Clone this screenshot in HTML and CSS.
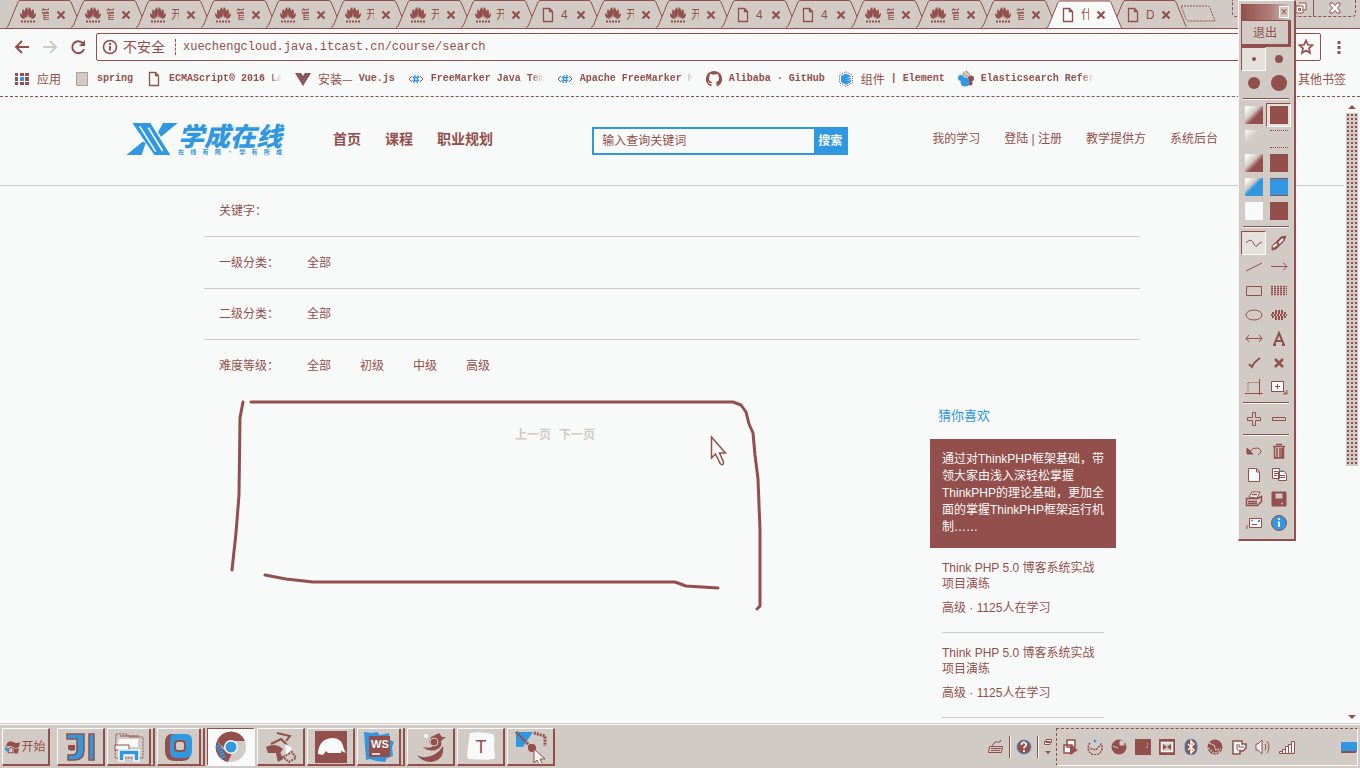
FILE: index.html
```html
<!DOCTYPE html>
<html lang="zh-CN">
<head>
<meta charset="utf-8">
<title>学成在线 - 课程搜索</title>
<link rel="stylesheet" href="styles.css">
</head>
<body>
<svg class="defs" aria-hidden="true">
  <symbol id="flower" viewBox="0 0 16 16"><path fill="currentColor" d="M7 11C4 7 4 2 7 0q2 5 0 11zM9 11c3-4 3-9 0-11Q7 5 9 11zM6 11C2 9 1 5 3 2q3 3 3 9zM10 11c4-2 5-6 3-9q-3 3-3 9zM5 12C1 12 0 9 0 6q4 2 5 6zM11 12c4 0 5-3 5-6q-4 2-5 6z"/><path d="M1 14.5h14" stroke="currentColor" stroke-width="2" stroke-dasharray="2 1"/></symbol>
  <symbol id="file" viewBox="0 0 16 16"><path d="M3.500 1.500h6l3 3v10h-9zM9.500 1.500v3h3" fill="none" stroke="currentColor" stroke-width="1.300"/></symbol>
  <symbol id="cross" viewBox="0 0 10 10"><path d="M1.500 1.500l7 7m0-7l-7 7" stroke="currentColor" stroke-width="2.200"/></symbol>
  <symbol id="tabshape" viewBox="0 0 76 28"><path d="M0 27.500Q2 27 3 24L12 2q1-1.500 2-1.500h49q1 0 2 1.500l9 22q1 3 2 3.500" fill="inherit" stroke="#934f4b"/></symbol>
  <symbol id="hash" viewBox="0 0 16 16"><path d="M4 5L1 8l3 3M12 5l3 3-3 3" fill="none" stroke="#934f4b"/><path d="M7 4L6 12M10 4L9 12M4.500 6.500h7M4.500 9.500h7" stroke="#2f98e0" stroke-width="1.300"/></symbol>
</svg>

<header class="browser">
  <div class="tabstrip">
    <div class="tab"><svg class="shape"><use href="#tabshape"/></svg><svg class="ic"><use href="#flower"/></svg><span>管</span><button aria-label="关闭"><svg><use href="#cross"/></svg></button></div>
    <div class="tab"><svg class="shape"><use href="#tabshape"/></svg><svg class="ic"><use href="#flower"/></svg><span>管</span><button aria-label="关闭"><svg><use href="#cross"/></svg></button></div>
    <div class="tab"><svg class="shape"><use href="#tabshape"/></svg><svg class="ic"><use href="#flower"/></svg><span>开</span><button aria-label="关闭"><svg><use href="#cross"/></svg></button></div>
    <div class="tab"><svg class="shape"><use href="#tabshape"/></svg><svg class="ic"><use href="#flower"/></svg><span>管</span><button aria-label="关闭"><svg><use href="#cross"/></svg></button></div>
    <div class="tab"><svg class="shape"><use href="#tabshape"/></svg><svg class="ic"><use href="#flower"/></svg><span>管</span><button aria-label="关闭"><svg><use href="#cross"/></svg></button></div>
    <div class="tab"><svg class="shape"><use href="#tabshape"/></svg><svg class="ic"><use href="#flower"/></svg><span>开</span><button aria-label="关闭"><svg><use href="#cross"/></svg></button></div>
    <div class="tab"><svg class="shape"><use href="#tabshape"/></svg><svg class="ic"><use href="#flower"/></svg><span>开</span><button aria-label="关闭"><svg><use href="#cross"/></svg></button></div>
    <div class="tab"><svg class="shape"><use href="#tabshape"/></svg><svg class="ic"><use href="#flower"/></svg><span>开</span><button aria-label="关闭"><svg><use href="#cross"/></svg></button></div>
    <div class="tab"><svg class="shape"><use href="#tabshape"/></svg><svg class="ic"><use href="#file"/></svg><span>4</span><button aria-label="关闭"><svg><use href="#cross"/></svg></button></div>
    <div class="tab"><svg class="shape"><use href="#tabshape"/></svg><svg class="ic"><use href="#flower"/></svg><span>开</span><button aria-label="关闭"><svg><use href="#cross"/></svg></button></div>
    <div class="tab"><svg class="shape"><use href="#tabshape"/></svg><svg class="ic"><use href="#flower"/></svg><span>开</span><button aria-label="关闭"><svg><use href="#cross"/></svg></button></div>
    <div class="tab"><svg class="shape"><use href="#tabshape"/></svg><svg class="ic"><use href="#file"/></svg><span>4</span><button aria-label="关闭"><svg><use href="#cross"/></svg></button></div>
    <div class="tab"><svg class="shape"><use href="#tabshape"/></svg><svg class="ic"><use href="#file"/></svg><span>4</span><button aria-label="关闭"><svg><use href="#cross"/></svg></button></div>
    <div class="tab"><svg class="shape"><use href="#tabshape"/></svg><svg class="ic"><use href="#flower"/></svg><span>管</span><button aria-label="关闭"><svg><use href="#cross"/></svg></button></div>
    <div class="tab"><svg class="shape"><use href="#tabshape"/></svg><svg class="ic"><use href="#flower"/></svg><span>管</span><button aria-label="关闭"><svg><use href="#cross"/></svg></button></div>
    <div class="tab"><svg class="shape"><use href="#tabshape"/></svg><svg class="ic"><use href="#flower"/></svg><span>管</span><button aria-label="关闭"><svg><use href="#cross"/></svg></button></div>
    <div class="tab active"><svg class="shape"><use href="#tabshape"/></svg><svg class="ic"><use href="#file"/></svg><span>什</span><button aria-label="关闭"><svg><use href="#cross"/></svg></button></div>
    <div class="tab"><svg class="shape"><use href="#tabshape"/></svg><svg class="ic"><use href="#file"/></svg><span>D</span><button aria-label="关闭"><svg><use href="#cross"/></svg></button></div>
    <button class="newtab" aria-label="新标签页"><svg viewBox="0 0 36 18"><path d="M1 1h26q2 0 3 2l5 13H9q-2 0-3-2z" fill="none" stroke="#934f4b" stroke-dasharray="2 1"/></svg></button>
    <div class="winbtns">
      <button aria-label="还原"><svg viewBox="0 0 12 12"><path d="M4 1h7v7H8.500M1 4h7v7H1zM3.500 6.500h2v2h-2z" fill="#f8faf9" stroke="#934f4b"/></svg></button>
      <button aria-label="关闭窗口"><svg viewBox="0 0 12 12"><path d="M1 1h3l2 2.500L8 1h3v2L8.500 6 11 9v2H8L6 8.500 4 11H1V9l2.500-3L1 3z" fill="#f8faf9" stroke="#934f4b"/></svg></button>
    </div>
  </div>

  <div class="toolbar">
    <button aria-label="后退"><svg viewBox="0 0 16 16"><path d="M15 8H2m6-6L2 8l6 6" fill="none" stroke="#934f4b" stroke-width="2"/></svg></button>
    <button aria-label="前进"><svg viewBox="0 0 16 16"><path d="M1 8h13M8 2l6 6-6 6" fill="none" stroke="#d2cbc5" stroke-width="2"/></svg></button>
    <button aria-label="刷新"><svg viewBox="0 0 16 16"><path d="M13 4.500A6 6 0 1 0 14 10" fill="none" stroke="#934f4b" stroke-width="2"/><path d="M15 1v6H9z" fill="#934f4b"/></svg></button>
    <div class="omnibox">
      <svg viewBox="0 0 16 16"><circle cx="8" cy="8" r="6.500" fill="none" stroke="#934f4b" stroke-width="1.600"/><path d="M8 7v4.500M8 4v2" stroke="#934f4b" stroke-width="2"/></svg>
      <span class="insecure">不安全</span>
      <input aria-label="地址" value="xuechengcloud.java.itcast.cn/course/search">
      <svg viewBox="0 0 16 16"><path d="M8 1.500l1.900 4.300 4.600.4-3.500 3.100 1 4.700-4-2.500L4 14l1-4.700L1.500 6.200l4.600-.4z" fill="none" stroke="#934f4b" stroke-width="1.700"/></svg>
    </div>
    <button aria-label="菜单"><svg viewBox="0 0 16 16"><path d="M6.500 2h3v3h-3zM6.500 7h3v3h-3zM6.500 12h3v3h-3z" fill="#934f4b"/></svg></button>
  </div>

  <nav class="bookmarks">
    <a href="#"><svg viewBox="0 0 16 16"><path fill="#934f4b" d="M1 2h3v3H1zM6 2h4v3H6zM11 2h4v3h-4zM1 6h3v4H1zM11 6h4v4h-4zM1 11h3v3H1zM6 11h4v3H6zM11 11h4v3h-4z"/><path fill="#2f98e0" d="M6 6h4v4H6z"/></svg><span class="zh">应用</span></a>
    <a href="#"><svg viewBox="0 0 16 16"><path d="M2.500 1.500h11v13h-11z" fill="#d2cbc5" stroke="#934f4b" stroke-dasharray="1 1"/></svg><span>spring</span></a>
    <a href="#"><svg><use href="#file"/></svg><span class="clip">ECMAScript® 2016 Language</span></a>
    <a href="#"><svg viewBox="0 0 16 16"><path d="M0 2h6l2 3 2-3h6L8 15z" fill="#934f4b"/><path d="M3 2l5 8 5-8" fill="none" stroke="#2f98e0" stroke-dasharray="1 1"/></svg><span class="mixed"><b class="zh">安装</b> <b class="zh">—</b> Vue.js</span></a>
    <a href="#"><svg><use href="#hash"/></svg><span class="clip">FreeMarker Java Template</span></a>
    <a href="#"><svg><use href="#hash"/></svg><span class="clip">Apache FreeMarker Manual</span></a>
    <a href="#"><svg viewBox="0 0 16 16"><path fill="#934f4b" d="M8 0a8 8 0 0 0-2.600 15.600V13c-2 .4-2.700-.6-3-1.500l-.8-1c.9 0 1.300.6 1.700 1.200.6.800 1.300.7 2.200.4q.1-.8.600-1.200C3.500 10.500 3 9 3 7.200q0-1.300.8-2.200Q3.500 4 4 2.700q1 0 2.100.9Q8 3.200 9.900 3.600 11 2.700 12 2.700q.5 1.300.2 2.300.8.900.8 2.200c0 1.800-.5 3.300-3.100 3.700q.7.500.7 2v2.700A8 8 0 0 0 8 0z"/></svg><span>Alibaba · GitHub</span></a>
    <a href="#"><svg viewBox="0 0 16 16"><path d="M8 .7l6.500 3.700v7.300L8 15.300 1.500 11.700V4.400z" fill="#f8faf9" stroke="#934f4b" stroke-dasharray="1 1"/><path d="M8 2.500l5 2.700-5 2.600 5-1.200v1.500L8 10l5-1v2l-5 2.800-5-2.800V5z" fill="#2f98e0"/></svg><span class="mixed"><b class="zh">组件</b> | Element</span></a>
    <a href="#"><svg viewBox="0 0 16 16"><circle cx="8" cy="4" r="4" fill="#d2cbc5"/><path d="M5 2l5 4M8 0l4 4" stroke="#934f4b" stroke-dasharray="1 1"/><circle cx="13" cy="7.500" r="3" fill="#934f4b"/><circle cx="12" cy="12" r="2.500" fill="#934f4b"/><circle cx="3" cy="7" r="3" fill="#2f98e0"/><circle cx="7" cy="11" r="4.500" fill="#2f98e0"/></svg><span class="clip">Elasticsearch Reference</span></a>
    <a class="others" href="#"><span class="zh">其他书签</span></a>
  </nav>
</header>

<div class="viewport">
  <div class="page">
    <header class="site">
      <a class="logo" href="#" aria-label="学成在线">
        <svg viewBox="0 0 154 96"><path d="M18 0h54l60 96H84z" fill="#2f98e0"/><path d="M40 10l48 76M66 14l43 70" stroke="#f8faf9" stroke-width="5" fill="none"/><path d="M110 0h44l-50 41-9-14zM0 96h46l12-36-9-4z" fill="#2f98e0"/></svg>
        <span class="wordmark"><strong>学成在线</strong><small><i>在</i><i>线</i><i>有</i><i>网</i><i>·</i><i>学</i><i>有</i><i>所</i><i>成</i></small></span>
      </a>
      <nav class="mainnav"><a href="#">首页</a><a href="#">课程</a><a href="#">职业规划</a></nav>
      <form class="search"><input aria-label="搜索课程" placeholder="输入查询关键词"><button type="button">搜索</button></form>
      <nav class="usernav"><a href="#">我的学习</a><a href="#">登陆 | 注册</a><a href="#">教学提供方</a><a href="#">系统后台</a></nav>
    </header>

    <section class="filters">
      <div class="row"><span class="label">关键字：</span></div>
      <div class="row"><span class="label">一级分类：</span><a href="#">全部</a></div>
      <div class="row"><span class="label">二级分类：</span><a href="#">全部</a></div>
      <div class="row"><span class="label">难度等级：</span><a href="#">全部</a><a href="#">初级</a><a href="#">中级</a><a href="#">高级</a></div>
    </section>

    <main class="content">
      <div class="results"><nav class="pager"><a href="#">上一页</a><a href="#">下一页</a></nav></div>
      <aside class="guess">
        <h2>猜你喜欢</h2>
        <p class="intro">通过对ThinkPHP框架基础，带领大家由浅入深轻松掌握ThinkPHP的理论基础，更加全面的掌握ThinkPHP框架运行机制……</p>
        <article><a href="#">Think PHP 5.0 博客系统实战项目演练</a><p>高级 · 1125人在学习</p></article>
        <article><a href="#">Think PHP 5.0 博客系统实战项目演练</a><p>高级 · 1125人在学习</p></article>
      </aside>
    </main>
  </div>
  <div class="scrollbar"><i class="up"></i><div class="track"><div class="thumb"></div></div><i class="down"></i></div>
</div>

<footer class="taskbar">
  <button class="start"><svg viewBox="0 0 16 16"><path d="M2 4q3-3 6-1 4 2 7 0l-1 5q-3 2-6 0-3-2-7 0z" fill="#934f4b"/><path d="M4 9q3-1 4 0v5q-3-1-5 0z" fill="#d2cbc5" stroke="#934f4b"/><path d="M9 9q3 1 5 0l-1 5q-2 1-4 0z" fill="#934f4b"/><path d="M0 8l3 1v4l-3-2z" fill="#2f98e0"/></svg>开始</button>
  <div class="tasks">
    <button aria-label="IDE"><svg viewBox="0 0 32 32"><path d="M2 3h17v16q0 10-9 10H3v-5h4q5 0 5-5V8H2zM24 3h5v26h-5z" fill="#2f98e0" stroke="#934f4b" stroke-width="1.500"/><path d="M3 14h7v5q-5 2-7-1z" fill="#934f4b"/></svg></button>
    <button class="stacked" aria-label="文件"><svg viewBox="0 0 32 32"><path d="M3 3h11l2 3h14v21H2z" fill="#d2cbc5" stroke="#934f4b" stroke-dasharray="2 1"/><path d="M6 8h19v8H4z" fill="#f8faf9"/><path d="M2 14h14v5H2zM7 5h19" fill="#f8faf9" stroke="#934f4b"/><path d="M6 30V19h20v11h-5v-6H11v6z" fill="#2f98e0" stroke="#f8faf9" stroke-width="1.500"/></svg></button>
    <button class="stacked" aria-label="虚拟机"><svg viewBox="0 0 32 32"><path d="M7 3h16v6h5v12q0 9-9 9h-7q-10 0-10-10V11q0-6 5-8z" fill="#934f4b"/><path d="M12 3h11q6 0 6 6v11q0 7-7 7H13q-6 0-6-7V9q0-6 5-6z" fill="#2f98e0"/><rect x="12" y="10" width="10" height="10" rx="3" fill="#d2cbc5" stroke="#934f4b" stroke-width="2"/></svg></button>
    <button class="pressed" aria-label="浏览器"><svg viewBox="0 0 32 32"><circle cx="16" cy="16" r="15" fill="#d2cbc5"/><path d="M2 10A15 15 0 0 1 30 10H16l-6 8z" fill="#934f4b"/><path d="M2 10A15 15 0 0 0 13 31l4-9-9-4z" fill="#934f4b"/><path d="M3 14l6 14" stroke="#2f98e0" stroke-width="5" stroke-dasharray="2 1"/><circle cx="16" cy="16" r="7" fill="#f8faf9"/><circle cx="16" cy="16" r="5.500" fill="#2f98e0"/></svg></button>
    <button aria-label="工具"><svg viewBox="0 0 32 32"><path d="M12 2l13 3-4 5M6 13l10-5 6 6" fill="none" stroke="#934f4b" stroke-width="2"/><path d="M1 16q9-5 17 2l-3 4H3zM14 18l4 10-5 3-2-8z" fill="#934f4b"/><path d="M20 13l7 4-6 8z" fill="#f8faf9"/><path d="M18 26l9-5 4 6-7 4z" fill="none" stroke="#934f4b" stroke-width="2" stroke-dasharray="2 1"/></svg></button>
    <button aria-label="数据库"><svg viewBox="0 0 32 32"><path d="M0 0h32v32H0z" fill="#934f4b"/><path d="M3 21Q5 7 18 7q9 0 11 11l2 4-5-2v2H13l-2-2-3 4-5-1z" fill="#f8faf9"/></svg></button>
    <button class="stacked" aria-label="WebStorm"><svg viewBox="0 0 32 32"><path d="M1 1l8 1 5-1 3 3 9-2 1 7 4 2-2 5 1 9-6 2-2 4-9-1-6-2-4 1z" fill="#2f98e0"/><path d="M6 5h21v21H6z" fill="#934f4b"/><path d="M9 23h8" stroke="#f8faf9" stroke-width="1.500"/><text x="8" y="17" class="ws">WS</text></svg></button>
    <button aria-label="XMind"><svg viewBox="0 0 32 32"><path d="M2 24q9 5 18-1 5-3 8-8 2 14-12 16Q7 31 2 24z" fill="#934f4b"/><path d="M16 6l8-4 3 4h4l-5 4q2 6-5 9-8 2-13-3 8 2 10-1-6-2-2-9z" fill="#934f4b"/><circle cx="19" cy="11" r="4" fill="none" stroke="#d2cbc5"/><path d="M3 24q10 3 20-4" stroke="#d2cbc5" fill="none"/><circle cx="11" cy="5" r="2" fill="#f8faf9"/></svg></button>
    <button aria-label="Typora"><svg viewBox="0 0 32 32"><path d="M5 2q10-2 23 1 2 2 1 12l1 12q-4 3-26 1-3-1-1-12z" fill="#f8faf9"/><text x="16" y="22" text-anchor="middle" class="ty">T</text></svg></button>
    <button aria-label="画笔"><svg viewBox="0 0 32 32"><path d="M1 1h17L8 16H1z" fill="#2f98e0"/><path d="M1 1l17 17M19 2l11 3v10" fill="none" stroke="#934f4b" stroke-width="3" stroke-dasharray="2 1"/><circle cx="17" cy="17" r="4" fill="#934f4b"/><path d="M19 18v14l3-3 2 4 3-1-2-4h5z" fill="#f8faf9" stroke="#934f4b"/></svg></button>
  </div>
  <div class="tools">
    <svg viewBox="0 0 16 16"><path d="M1.500 7.500h13l-1 6h-13zM4 7l3-4h5l1-2M3 9.500h10M3 11.500h9" fill="none" stroke="#934f4b"/></svg>
    <span class="divider"></span>
    <svg viewBox="0 0 16 16"><circle cx="8" cy="8" r="7" fill="#934f4b" stroke="#2f98e0"/><path d="M5.500 6q0-3 3-2.500 3 1 1 3.500Q8 8 8 9.500M8 11v2" stroke="#f8faf9" stroke-width="1.800" fill="none"/></svg>
    <span class="divider"></span>
    <svg class="mini" viewBox="0 0 8 16"><path d="M2 .5h5.500v3H2zM.5 2.500H6v3H.5z" fill="#f8faf9" stroke="#934f4b"/><path d="M1 12h6l-3 3z" fill="#934f4b"/></svg>
  </div>
  <div class="tray">
    <svg viewBox="0 0 16 16"><path d="M4 1h8v7H4zM1 6h8v8H1z" fill="#f8faf9" stroke="#934f4b" stroke-width="1.500"/><path d="M7 6l8 5-8 5z" fill="#934f4b"/></svg>
    <svg viewBox="0 0 16 16"><path d="M3 4a7 7 0 1 0 11 1l-5 6-7-2" fill="none" stroke="#934f4b" stroke-width="1.500" stroke-dasharray="2 1"/><circle cx="8" cy="2" r="1.300" fill="#2f98e0"/></svg>
    <svg viewBox="0 0 16 16"><circle cx="8" cy="8" r="7.500" fill="#934f4b"/><path d="M9 2h4v4H9zM2 7l5 2" fill="#d2cbc5" stroke="#d2cbc5"/></svg>
    <svg viewBox="0 0 16 16"><path d="M0 0h16v16H0z" fill="#934f4b"/><path d="M11 9l2-2M12 5h1" stroke="#d2cbc5"/></svg>
    <svg viewBox="0 0 16 16"><path d="M0 0h16v16H0z" fill="#934f4b"/><path d="M2.500 3.500h11v9h-11z" fill="#d2cbc5" stroke="#f8faf9" stroke-width="1.500"/><path d="M4 5l4 3-4 3zM12 5L8 8l4 3z" fill="#934f4b"/></svg>
    <svg viewBox="0 0 16 16"><rect x="2" width="12" height="16" rx="6" fill="#934f4b" stroke="#2f98e0"/><path d="M5 5l6 6-3 3V2l3 3-6 6" fill="none" stroke="#f8faf9" stroke-width="1.500"/></svg>
    <svg viewBox="0 0 16 16"><circle cx="8" cy="8" r="7.500" fill="#934f4b"/><path d="M2 4l5 2 2 5 5-1M1 9l6 5 6-1" stroke="#d2cbc5" stroke-width="1.500" fill="none" stroke-dasharray="2 1"/></svg>
    <svg viewBox="0 0 16 16"><path d="M2 2h9v3h4v4l-3 3H9v3H2z" fill="#f8faf9" stroke="#934f4b" stroke-width="1.500"/><path d="M6 5v5q1 3 4 1M8 5v3h5" fill="none" stroke="#934f4b"/></svg>
    <svg viewBox="0 0 16 16"><path d="M1 5h2l4-4v14l-4-4H1z" fill="#f8faf9" stroke="#934f4b"/><path d="M10 5q2 3 0 6M12 2q4 6 0 12" fill="none" stroke="#934f4b"/></svg>
    <svg viewBox="0 0 16 16"><path d="M.5 12.500h3v2h-3zM3.500 10.500h3v4h-3zM6.500 7.500h3v7h-3zM9.500 5.500h3v9h-3zM12.500 2.500h3v12h-3z" fill="#f8faf9" stroke="#934f4b"/></svg>
    <svg class="desktop" viewBox="0 0 16 16"><path d="M0 3h16v10H0z" fill="#2f98e0"/><path d="M0 13h15" stroke="#934f4b" stroke-width="2"/></svg>
  </div>
</footer>

<svg class="ink" aria-hidden="true">
  <g fill="none" stroke="#934f4b" stroke-width="3" stroke-linecap="round" stroke-linejoin="round">
    <path d="M243 402L240 418L239 495L236 533L232 570"/>
    <path d="M251 402H733L741 405L746 412L749 424L753 433L755 455L758 479L760 530V606L757 609"/>
    <path d="M265 575L286 579L313 582H675L686 586L718 588"/>
  </g>
  <path d="M711.500 437v21l4-4 5 10q3 2 3-2l-4-9h6z" fill="#f8faf9" stroke="#934f4b" stroke-width="1.500"/>
</svg>

<aside class="palette" aria-label="画图工具">
  <div class="title"><button aria-label="关闭工具">×</button></div>
  <button class="exit">退出</button>
  <div class="grid">
    <button class="on" aria-label="笔1"><svg viewBox="0 0 18 18"><circle cx="9" cy="9" r="2" fill="#934f4b"/></svg></button>
    <button aria-label="笔2"><svg viewBox="0 0 18 18"><circle cx="9" cy="9" r="4" fill="#934f4b"/></svg></button>
    <button aria-label="笔3"><svg viewBox="0 0 18 18"><circle cx="9" cy="9" r="6" fill="#934f4b"/></svg></button>
    <button aria-label="笔4"><svg viewBox="0 0 18 18"><circle cx="9" cy="9" r="8" fill="#934f4b"/></svg></button>
  </div>
  <hr>
  <div class="grid">
    <button aria-label="透明红"><i class="sw fade"></i></button><button class="on" aria-label="红"><i class="sw red"></i></button>
    <button aria-label="透明灰"><i class="sw fadegrey"></i></button><button aria-label="灰"><i class="sw grey"></i></button>
    <button aria-label="透明棕"><i class="sw fade"></i></button><button aria-label="棕"><i class="sw red"></i></button>
    <button aria-label="透明蓝"><i class="sw fadeblue"></i></button><button aria-label="蓝"><i class="sw blue"></i></button>
    <button aria-label="白"><i class="sw white"></i></button><button aria-label="黑"><i class="sw red"></i></button>
  </div>
  <hr>
  <div class="grid lines">
    <button class="on" aria-label="曲线"><svg viewBox="0 0 18 18"><path d="M1 9q4-5 7-1 3 8 5 2l4-2"/></svg></button>
    <button aria-label="橡皮"><svg viewBox="0 0 18 18"><path d="M2 12l9-9 5-1-2 5-8 8-4 1z" fill="#934f4b"/><path d="M3 13l4-3M9 9l4-4" stroke="#f8faf9" stroke-width="2"/></svg></button>
    <button aria-label="直线"><svg viewBox="0 0 18 18"><path d="M1 13L17 5"/></svg></button>
    <button aria-label="箭头"><svg viewBox="0 0 18 18"><path d="M1 8.500h16m-4-4l4 4-4 4"/></svg></button>
    <button aria-label="矩形"><svg viewBox="0 0 18 18"><path d="M1.500 4.500h15v9h-15z"/></svg></button>
    <button aria-label="实心矩形"><svg viewBox="0 0 18 18"><path d="M1 4.500h16M1 6.500h16M1 8.500h16M1 10.500h16M1 12.500h16" stroke-width="1.500" stroke-dasharray="2 1"/></svg></button>
    <button aria-label="椭圆"><svg viewBox="0 0 18 18"><ellipse cx="9" cy="9" rx="8" ry="5"/></svg></button>
    <button aria-label="实心椭圆"><svg viewBox="0 0 18 18"><path d="M5 5h8M2 7h14M1 9h16M2 11h14M5 13h8" stroke-width="1.800" stroke-dasharray="2 1"/></svg></button>
    <button aria-label="双箭头"><svg viewBox="0 0 18 18"><path d="M1 8.500h16M4 5L1 8.500 4 12M14 5l3 3.500-3 3.500"/></svg></button>
    <button aria-label="文字"><svg viewBox="0 0 18 18"><path d="M4 15L9 3l5 12M6 11h6M3 15h3M12 15h3" stroke-width="2"/></svg></button>
    <button aria-label="对勾"><svg viewBox="0 0 18 18"><path d="M4 10l3 3q2-5 8-9" stroke-width="2"/></svg></button>
    <button aria-label="叉"><svg viewBox="0 0 18 18"><path d="M5 5l8 8M13 5l-8 8" stroke-width="2.500"/></svg></button>
    <button aria-label="截图"><svg viewBox="0 0 18 18"><path d="M3 16V4.500h11" stroke-dasharray="1 1"/><path d="M0 15.500h18M14.500 1v16"/></svg></button>
    <button aria-label="放大"><svg viewBox="0 0 18 18"><path d="M1.500 3.500h12v10h-12z" fill="#f8faf9"/><path d="M5 8.500h5M7.500 6v5M13 13l4 3m0-4v4h-4"/></svg></button>
  </div>
  <hr>
  <div class="grid lines">
    <button aria-label="加"><svg viewBox="0 0 18 18"><path d="M7.500 2.500h3v5h5v3h-5v5h-3v-5h-5v-3h5z"/></svg></button>
    <button aria-label="减"><svg viewBox="0 0 18 18"><path d="M2.500 7.500h13v3h-13z"/></svg></button>
  </div>
  <hr>
  <div class="grid lines">
    <button aria-label="撤销"><svg viewBox="0 0 18 18"><path d="M4 10q4-5 9-4 6 3 0 7"/><path d="M2 6v6h6z" fill="#934f4b"/></svg></button>
    <button aria-label="删除"><svg viewBox="0 0 18 18"><path d="M3 4.500h12M6 2.500h6M4.500 5v11h9V5M7 6v10M10 6v10M12 6v10" stroke-width="1.500"/></svg></button>
    <button aria-label="新建"><svg viewBox="0 0 18 18"><path d="M3.500 2.500h8l3 3v10h-11z" fill="#f8faf9"/><path d="M11.500 3v3h3"/></svg></button>
    <button aria-label="复制"><svg viewBox="0 0 18 18"><path d="M2.500 2.500h7v10h-7zM8.500 5.500h6l2 3v6h-8z" fill="#f8faf9"/><path d="M4 5.500h4M4 7.500h4M4 9.500h3M10 9.500h5M10 11.500h5"/><path d="M9 5h5" stroke="#2f98e0"/></svg></button>
    <button aria-label="打印"><svg viewBox="0 0 18 18"><path d="M4 7l3-5h8l-3 6z" fill="#f8faf9"/><path d="M1.500 8.500h11l4-2v5l-4 4h-11zM3 11.500h9M3 13.500h9M7 4.500h5" stroke-width="1.500"/></svg></button>
    <button aria-label="保存"><svg viewBox="0 0 18 18"><path d="M2 2h14v14H2z" fill="#934f4b"/><path d="M5 3h8v6H5z" fill="#d2cbc5"/><path d="M11 12h2v3h-2z" fill="#f8faf9"/></svg></button>
    <button aria-label="邮件"><svg viewBox="0 0 18 18"><path d="M4.500 4.500h12v9h-12z" fill="#f8faf9"/><path d="M7 10.500h5M6 7l2-1M1 12h2M1 14h2"/><path d="M13 7h2" stroke="#2f98e0" stroke-width="2"/></svg></button>
    <button aria-label="关于"><svg viewBox="0 0 18 18"><circle cx="9" cy="9" r="7.500" fill="#2f98e0"/><path d="M9 7.500V13M9 4v2" stroke="#f8faf9" stroke-width="2"/></svg></button>
  </div>
</aside>
</body>
</html>
```
FILE: styles.css
```css
:root {
  --ink: #934f4b;
  --grey: #d2cbc5;
  --paper: #f8faf9;
  --blue: #2f98e0;
}
* { box-sizing: border-box; margin: 0; padding: 0; }
body {
  position: relative;
  display: flex;
  flex-direction: column;
  height: 100vh;
  overflow: hidden;
  background: var(--paper);
  color: var(--ink);
  font: 12px/16px "Liberation Sans", "Noto Sans CJK SC", sans-serif;
}
a { color: inherit; text-decoration: none; }
button { border: 0; background: none; color: inherit; font: inherit; }
svg { display: block; flex: none; width: 16px; height: 16px; }
.defs { position: absolute; width: 0; height: 0; }

/* browser frame */
.browser { flex: none; border-bottom: 1px dashed var(--ink); }
.tabstrip {
  display: flex;
  height: 29px;
  padding-left: 6px;
  background: var(--grey);
  border-bottom: 1px solid var(--ink);
}
.tab {
  position: relative;
  display: flex;
  align-items: center;
  flex: none;
  width: 65px;
  height: 29px;
  padding-left: 14px;
}
.tab .shape { position: absolute; left: 0; top: 0; width: 76px; height: 28px; fill: var(--grey); }
.tab.active { z-index: 1; }
.tab.active .shape { fill: var(--paper); height: 29px; }
.tab .ic { position: relative; }
.tab span { position: relative; width: 8px; margin: 0 7px 0 5px; overflow: hidden; white-space: nowrap; }
.tab button { position: relative; }
.tab button svg { width: 10px; height: 10px; }
.newtab { margin-left: 4px; }
.newtab svg { width: 36px; height: 18px; }
.winbtns {
  display: flex;
  width: 124px;
  height: 17px;
  margin: 0 4px 0 auto;
  padding-left: 55px;
  border: 1px dashed var(--ink);
  border-top: 0;
  border-radius: 0 0 4px 4px;
}
.winbtns button { display: flex; flex: none; width: 25px; align-items: center; justify-content: center; }
.winbtns button + button { flex: 1; border-left: 1px solid var(--ink); }
.winbtns svg { width: 12px; height: 12px; }
.toolbar { display: flex; align-items: center; gap: 12px; height: 36px; padding: 0 13px 0 14px; }
.omnibox {
  display: flex;
  flex: 1;
  align-items: center;
  height: 28px;
  margin: 0 -2px;
  padding: 0 6px 0 5px;
  border: 1px solid var(--ink);
  border-radius: 2px;
}
.insecure { margin-left: 5px; padding-right: 10px; border-right: 1px dashed var(--ink); font-size: 14px; }
.omnibox input {
  flex: 1;
  min-width: 0;
  margin-left: 7px;
  border: 0;
  background: none;
  color: inherit;
  font: 12px/16px "Liberation Mono", monospace;
}
.bookmarks { display: flex; align-items: center; gap: 13px; height: 31px; padding: 0 14px 3px; }
.bookmarks a { display: flex; align-items: center; gap: 7px; }
.bookmarks span { font: bold 10px/16px "Liberation Mono", "Noto Sans CJK SC", monospace; white-space: pre; }
.bookmarks .mixed { display: flex; align-items: center; }
.bookmarks .zh { font: 12px/16px "Noto Sans CJK SC", sans-serif; }
.bookmarks .clip {
  width: 113px;
  overflow: hidden;
  -webkit-mask-image: linear-gradient(90deg, #000 88%, transparent);
  mask-image: linear-gradient(90deg, #000 88%, transparent);
}
.bookmarks .others { margin-left: auto; }

/* page */
.viewport { display: flex; flex: 1; min-height: 0; }
.page { flex: 1; min-width: 0; overflow: hidden; }
.site {
  display: flex;
  align-items: center;
  height: 89px;
  padding: 0 126px 5px;
  border-bottom: 1px solid var(--grey);
}
.logo { display: flex; align-items: center; color: var(--blue); }
.logo svg { width: 52px; height: 32px; }
.wordmark strong { display: block; font: italic 900 26px/26px "Noto Sans CJK SC", sans-serif; }
.wordmark small { display: flex; justify-content: space-between; font: bold 6px/8px "Noto Sans CJK SC", sans-serif; }
.wordmark i { font-style: normal; }
.mainnav { display: flex; gap: 24px; margin-left: 51px; font-size: 14px; font-weight: bold; }
.search { display: flex; width: 256px; height: 28px; margin: 4px 84px 0 auto; border: 2px solid var(--blue); }
.search input {
  flex: 1;
  min-width: 0;
  padding-left: 8px;
  border: 0;
  background: none;
  font: inherit;
}
.search input::placeholder { color: var(--ink); opacity: 1; }
.search button { width: 32px; background: var(--blue); color: var(--paper); font-weight: bold; }
.usernav { display: flex; gap: 24px; }
.filters { max-width: 936px; margin: 0 auto; }
.row { display: flex; align-items: center; gap: 29px; height: 51px; padding-left: 15px; border-bottom: 1px solid var(--grey); }
.row:nth-child(even) { height: 52px; }
.row:last-child { border: 0; }
.label { width: 59px; white-space: nowrap; }
.content { display: flex; justify-content: space-between; max-width: 936px; margin: 0 auto; padding: 16px 24px 0 0; }
.results { flex: 1; min-width: 0; padding: 19px 24px 0 0; }
.pager { display: flex; justify-content: center; gap: 8px; color: var(--grey); font-weight: bold; }
.guess { width: 186px; }
.guess h2 { padding-left: 8px; color: var(--blue); font-size: 13px; font-weight: normal; line-height: 16px; }
.intro { margin-top: 15px; padding: 12px 8px 12px 12px; background: var(--ink); color: var(--paper); line-height: 17px; }
.guess article { margin: 0 12px; padding: 12px 0 16px; border-bottom: 1px solid var(--grey); }
.guess article p { margin-top: 8px; }
.guess article a { display: block; }
.scrollbar { display: flex; flex-direction: column; align-items: center; width: 16px; padding: 5px 0; }
.scrollbar i { border: 4px solid transparent; }
.scrollbar .up { border-top: 0; border-bottom-color: var(--ink); margin-top: 3px; }
.scrollbar .down { border-bottom: 0; border-top-color: var(--ink); }
.track { flex: 1; width: 12px; margin: 4px 0; }
.thumb {
  height: 59%;
  background: radial-gradient(circle, var(--ink) 1px, transparent 1px) 0 0 / 4px 4px var(--grey);
}

/* taskbar */
.taskbar {
  display: flex;
  flex: none;
  align-items: center;
  height: 44px;
  padding: 1px 2px 0;
  background: var(--grey);
  border-top: 1px solid var(--paper);
  box-shadow: 0 -1px var(--grey);
}
.taskbar button {
  display: flex;
  align-items: center;
  justify-content: center;
  width: 48px;
  height: 38px;
  border: 1px solid var(--paper);
  border-right: 2px solid var(--ink);
  border-bottom: 2px solid var(--ink);
}
.taskbar button svg { width: 32px; height: 32px; }
.taskbar .start svg { width: 16px; height: 16px; }
.tasks { display: flex; gap: 2px; margin-left: 7px; }
.taskbar .stacked { border-right: 6px double var(--ink); }
.taskbar .pressed { background: var(--paper); border-color: var(--ink) var(--paper) var(--paper) var(--ink); }
.ws { fill: var(--paper); font: bold 11px "Liberation Sans", sans-serif; }
.ty { fill: var(--ink); font: 18px "Liberation Sans", sans-serif; }
.tools { display: flex; align-items: center; gap: 5px; margin-left: auto; }
.tools .mini { width: 8px; }
.divider { width: 2px; height: 22px; border-left: 1px solid var(--ink); border-right: 1px solid var(--paper); }
.tray {
  display: flex;
  align-items: center;
  gap: 8px;
  width: 302px;
  height: 38px;
  margin-left: 4px;
  padding-left: 6px;
  border: 1px dashed var(--ink);
  border-right: 1px solid var(--paper);
  border-bottom: 1px solid var(--paper);
}
.tray .desktop { margin-left: auto; }

/* drawings over the screen */
.ink { position: absolute; left: 0; top: 0; width: 100%; height: 100%; pointer-events: none; }

/* floating drawing tools */
.palette {
  position: absolute;
  z-index: 2;
  top: 0;
  right: 64px;
  width: 58px;
  padding: 3px 3px 4px 2px;
  background: var(--grey);
  border: 1px solid var(--paper);
  border-right: 2px solid var(--ink);
  border-bottom: 2px solid var(--ink);
}
.palette .title {
  display: flex;
  justify-content: flex-end;
  height: 16px;
  padding: 2px;
  background: linear-gradient(90deg, var(--ink), #b07e7a 60%, var(--grey));
}
.palette .title button { width: 10px; height: 12px; border: 1px solid var(--paper); background: var(--grey); line-height: 10px; }
.exit { display: block; width: 100%; height: 27px; border: 1px solid var(--ink); border-right-width: 3px; border-bottom-width: 3px; }
.grid { display: grid; grid-template-columns: 25px 25px; }
.grid button { display: flex; align-items: center; justify-content: center; height: 24px; border: 1px solid transparent; }
.grid svg { width: 18px; height: 18px; }
.grid .on { background: #e5e2de; border-color: var(--ink) var(--paper) var(--paper) var(--ink); }
.palette hr { height: 2px; margin: 3px 2px; border: 0; border-top: 1px solid var(--ink); border-bottom: 1px solid var(--paper); }
.lines svg { fill: none; stroke: var(--ink); }
.sw { width: 18px; height: 18px; }
.red { background: var(--ink); }
.blue { background: var(--blue); border-top: 1px solid var(--ink); border-bottom: 1px solid var(--ink); }
.white { background: var(--paper); }
.grey { border-top: 1px dotted var(--ink); border-bottom: 1px dotted var(--ink); }
.fade { background: linear-gradient(135deg, var(--paper) 10%, var(--grey) 40%, var(--ink) 60%); }
.fadegrey { background: linear-gradient(135deg, var(--paper), var(--grey) 40%); }
.fadeblue { background: linear-gradient(135deg, var(--paper) 10%, var(--grey) 35%, var(--blue) 50%); }
```
